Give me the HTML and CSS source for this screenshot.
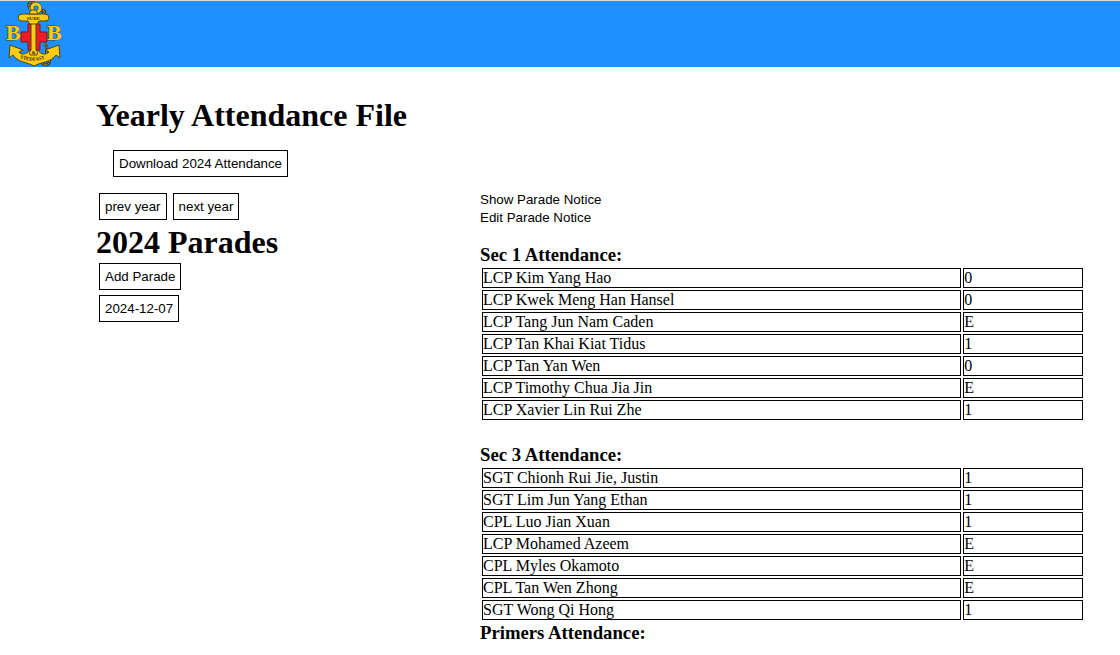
FILE: index.html
```html
<!DOCTYPE html>
<html lang="en">
<head>
<meta charset="utf-8">
<title>Yearly Attendance File</title>
<link rel="stylesheet" href="styles.css">
</head>
<body>
<header class="topbar">
  <a class="home" href="#" aria-label="Home">
    <svg class="logo" viewBox="0 0 70 66" role="img" aria-label="Anchor crest">
      <path class="rope" d="M30 8C26 2 33 -1 35 3M40 9C46 9 46 12 42 13M44 43C50 46 45 50 47 54C50 57 51 63 46 64C41 65 43 59 40 60"/>
      <path class="rope-core" d="M30 8C26 2 33 -1 35 3M40 9C46 9 46 12 42 13M44 43C50 46 45 50 47 54C50 57 51 63 46 64C41 65 43 59 40 60"/>
      <circle class="ring-edge" cx="36" cy="7" r="4"/>
      <circle class="ring" cx="36" cy="7" r="4"/>
      <path class="gold" d="M10 44L23 49L19 51C21 54 26 54 30 49H38C41 54 46 54 49 51L45 49L59 44L60 57L56 54C52 61 41 61 34 65C27 61 17 61 13 54L9 57Z"/>
      <path class="red" d="M28 23H40V31H47V41H40V49H28V41H21V31H28Z"/>
      <path class="gold" d="M31 20H36V49Q39 51 37 54H30Q28 51 31 49Z"/>
      <path class="gold" d="M22 13H45Q49 13 49 17Q49 20 45 20H39L37 23H30L28 20H22Q18 20 18 17Q18 13 22 13Z"/>
      <path class="gold" d="M31 9H36L38 13H29Z"/>
      <text class="motto" x="33.5" y="19" text-anchor="middle">SURE</text>
      <text class="motto" x="33.5" y="53" text-anchor="middle">&amp;</text>
      <path id="motto-arc" class="guide" d="M20 57Q34 63 49 56"/>
      <text class="motto"><textPath href="#motto-arc">STEDFAST</textPath></text>
      <text class="initial" x="6" y="39">B</text>
      <text class="initial" x="47" y="39">B</text>
    </svg>
  </a>
</header>
<main class="page">
  <h1 class="title">Yearly Attendance File</h1>
  <div class="download"><button class="btn" type="button">Download 2024 Attendance</button></div>
  <div class="columns">
    <section class="parades">
      <div class="row"><button class="btn" type="button">prev year</button><button class="btn" type="button">next year</button></div>
      <h1 class="subtitle">2024 Parades</h1>
      <div class="stack">
        <button class="btn" type="button">Add Parade</button>
        <button class="btn" type="button">2024-12-07</button>
      </div>
    </section>
    <section class="attendance">
      <nav class="notices">
        <a href="#">Show Parade Notice</a>
        <a href="#">Edit Parade Notice</a>
      </nav>
      <h3 class="section-title">Sec 1 Attendance:</h3>
      <table class="roll section-gap">
        <tr><td>LCP Kim Yang Hao</td><td class="mark">0</td></tr>
        <tr><td>LCP Kwek Meng Han Hansel</td><td class="mark">0</td></tr>
        <tr><td>LCP Tang Jun Nam Caden</td><td class="mark">E</td></tr>
        <tr><td>LCP Tan Khai Kiat Tidus</td><td class="mark">1</td></tr>
        <tr><td>LCP Tan Yan Wen</td><td class="mark">0</td></tr>
        <tr><td>LCP Timothy Chua Jia Jin</td><td class="mark">E</td></tr>
        <tr><td>LCP Xavier Lin Rui Zhe</td><td class="mark">1</td></tr>
      </table>
      <h3 class="section-title">Sec 3 Attendance:</h3>
      <table class="roll">
        <tr><td>SGT Chionh Rui Jie, Justin</td><td class="mark">1</td></tr>
        <tr><td>SGT Lim Jun Yang Ethan</td><td class="mark">1</td></tr>
        <tr><td>CPL Luo Jian Xuan</td><td class="mark">1</td></tr>
        <tr><td>LCP Mohamed Azeem</td><td class="mark">E</td></tr>
        <tr><td>CPL Myles Okamoto</td><td class="mark">E</td></tr>
        <tr><td>CPL Tan Wen Zhong</td><td class="mark">E</td></tr>
        <tr><td>SGT Wong Qi Hong</td><td class="mark">1</td></tr>
      </table>
      <h3 class="section-title">Primers Attendance:</h3>
    </section>
  </div>
</main>
</body>
</html>
```
FILE: styles.css
```css
* { box-sizing: border-box; }
body {
  margin: 0;
  background: #fff;
  color: #000;
  font: 16px/16px "Liberation Serif", "Times New Roman", serif;
}
h1, h3 { margin: 0; }
.topbar {
  display: flex;
  background: #1e90ff;
  border-top: 1px solid #d9dde3;
}
.home { display: block; }
.logo { display: block; width: 70px; height: 66px; }
.gold { fill: #fc1; stroke: #4a4418; stroke-width: 1; stroke-linejoin: round; }
.red { fill: #ee1c25; stroke: #6b2020; stroke-width: 1; }
.rope { fill: none; stroke: #3c3c28; stroke-width: 3; }
.rope-core { fill: none; stroke: #e5b820; stroke-width: 1; stroke-dasharray: 2 1; }
.ring-edge { fill: none; stroke: #4a4418; stroke-width: 4; }
.ring { fill: none; stroke: #fc1; stroke-width: 3; }
.guide { fill: none; }
.motto { font: bold 5px "Liberation Serif", serif; fill: #2b2710; }
.initial {
  font: bold 22px "Liberation Serif", serif;
  fill: #fc1;
  stroke: #4a4418;
  stroke-width: 1;
  paint-order: stroke;
}
.page { padding: 28px 35px 8px 96px; }
.title, .subtitle { font-size: 32px; line-height: 40px; }
.download { display: flex; padding: 15px 17px 14px; }
.btn {
  padding: 5px;
  border: 1px solid #000;
  background: #fff;
  color: #000;
  font: smaller/15px "Liberation Sans", Arial, sans-serif;
}
.columns { display: grid; grid-template-columns: 384fr 605fr; align-items: start; }
.row { display: flex; gap: 6px; padding: 2px 3px; }
.stack {
  display: flex;
  flex-direction: column;
  align-items: flex-start;
  gap: 5px;
  padding: 1px 3px;
}
.notices { display: flex; flex-direction: column; align-items: flex-start; margin-bottom: 17px; }
.notices a {
  color: #000;
  text-decoration: none;
  font: smaller/18px "Liberation Sans", Arial, sans-serif;
}
.section-title { line-height: 22px; }
.roll { width: 100%; border-spacing: 2px; table-layout: fixed; }
.section-gap { margin-bottom: 22px; }
.roll td { padding: 1px 1px 1px 0; border: 1px solid #000; }
.roll .mark { width: 20%; }
.roll td:first-child { width: 80%; }
```
